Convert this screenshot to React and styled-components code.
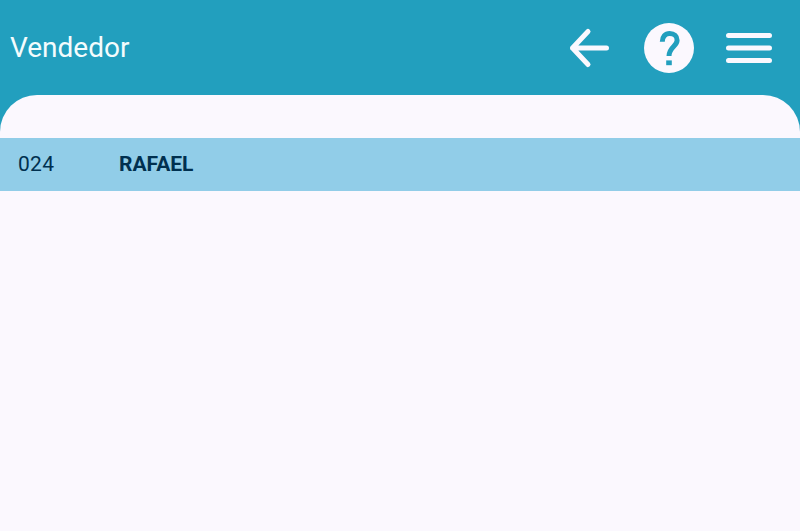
import React from 'react';
import styled, { createGlobalStyle } from 'styled-components';

const GlobalStyle = createGlobalStyle`
  html, body {
    margin: 0;
    height: 100%;
    background: #229fbe;
    font-family: Roboto, sans-serif;
  }
  #root {
    height: 100%;
  }
`;

const Page = styled.div`
  height: 531px;
  display: flex;
  flex-direction: column;
  overflow: hidden;
  background: #229fbe;
`;

const Toolbar = styled.header`
  height: 95px;
  flex: none;
  display: flex;
  align-items: flex-start;
  justify-content: space-between;
  padding: 0 28px 0 10px;
  box-sizing: border-box;
`;

const Title = styled.h1`
  margin: 31px 0 0;
  font-size: 28px;
  line-height: 34px;
  font-weight: 400;
  color: #f4fcfd;
`;

const Actions = styled.div`
  display: flex;
  align-items: center;
  margin-top: 22px;
  height: 52px;
`;

const IconButton = styled.button`
  border: 0;
  padding: 0;
  background: none;
  display: flex;
  margin-left: ${(p) => p.$gap}px;
`;

const Sheet = styled.main`
  flex: 1;
  background: #fbf8fe;
  border-radius: 37px 37px 0 0;
  padding-top: 43px;
`;

const Row = styled.div`
  height: 53px;
  display: flex;
  align-items: center;
  background: #91cde8;
  color: #00304f;
  font-size: 21px;
  line-height: 51px;
  padding: 0 0 1px 18px;
  box-sizing: border-box;
`;

const Code = styled.span`
  width: 101px;
  letter-spacing: 0.3px;
`;

const Name = styled.span`
  font-weight: 700;
`;

const BackIcon = () => (
  <svg width="42" height="42" viewBox="0 0 42 42" fill="none" stroke="#fbf8fe" strokeWidth="5" strokeLinecap="round" strokeLinejoin="round">
    <path d="M37.500 21H3.500M19 4.500 3.500 21 19 37.500" />
  </svg>
);

const HelpIcon = () => (
  <svg width="50" height="50" viewBox="0 0 50 50">
    <circle cx="25" cy="25" r="25" fill="#fbf8fe" />
    <path d="M18.300 18.800c0-5 2.900-8.300 7.400-8.300 4.500 0 7.400 2.800 7.400 6.700 0 6.300-8.100 6.600-8.100 15.900" fill="none" stroke="#229fbe" strokeWidth="5" />
    <rect x="22.200" y="37.400" width="5.600" height="4.800" fill="#229fbe" />
  </svg>
);

const MenuIcon = () => (
  <svg width="46" height="32" viewBox="0 0 46 32" stroke="#fbf8fe" strokeWidth="5" strokeLinecap="round">
    <path d="M2.500 3.500h41M2.500 16h41M2.500 28.500h41" />
  </svg>
);

export default function App() {
  return (
    <Page>
      <GlobalStyle />
      <Toolbar>
        <Title>Vendedor</Title>
        <Actions>
          <IconButton><BackIcon /></IconButton>
          <IconButton $gap={33}><HelpIcon /></IconButton>
          <IconButton $gap={32}><MenuIcon /></IconButton>
        </Actions>
      </Toolbar>
      <Sheet>
        <Row>
          <Code>024</Code>
          <Name>RAFAEL</Name>
        </Row>
      </Sheet>
    </Page>
  );
}
